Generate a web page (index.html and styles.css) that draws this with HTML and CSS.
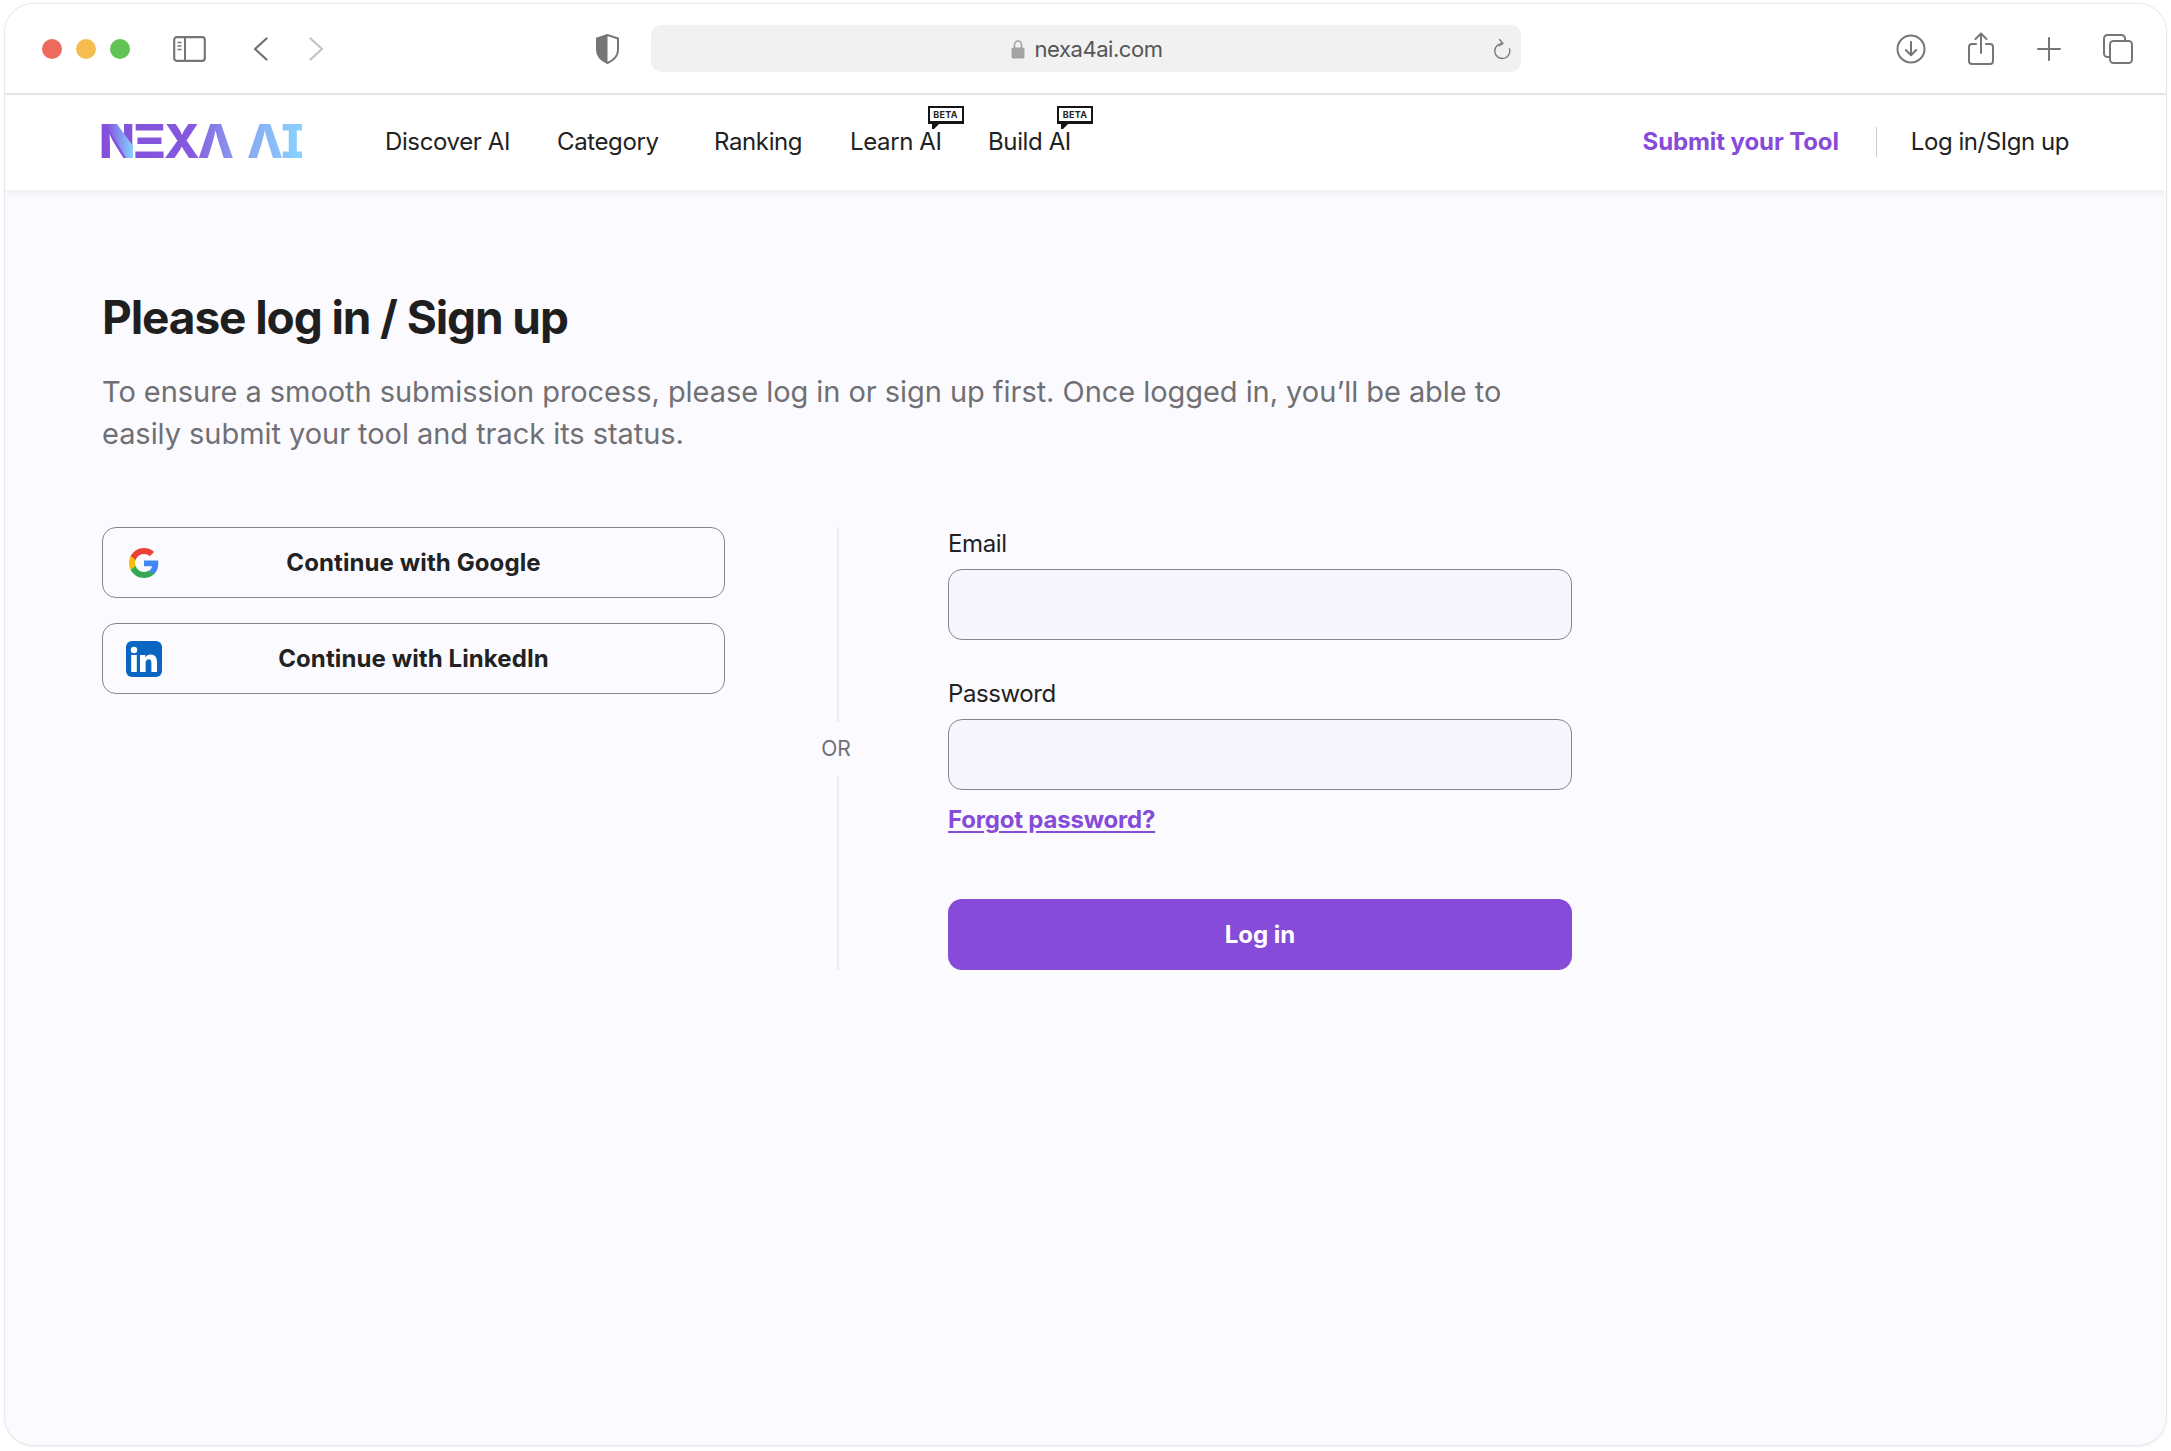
FILE: index.html
```html
<!DOCTYPE html>
<html lang="en">
<head>
<meta charset="utf-8">
<title>Nexa AI - Log in</title>
<link rel="stylesheet" href="styles.css">
</head>
<body>
<div class="window">
  <header class="toolbar">
    <div class="lights"><span class="light red"></span><span class="light yellow"></span><span class="light green"></span></div>
    <svg class="ic sidebar" width="33" height="26" viewBox="0 0 33 26" fill="none" stroke="#767676"><rect x="1.2" y="1.2" width="30.6" height="23.6" rx="2.5" stroke-width="2.2"/><path d="M12 1v24" stroke-width="2"/><path d="M4.5 6.5h4M4.5 10h4M4.5 13.500h4" stroke-width="1.6"/></svg>
    <svg class="ic back" width="15" height="24" viewBox="0 0 15 24" fill="none" stroke="#6f6f6f" stroke-width="2.2" stroke-linecap="round" stroke-linejoin="round"><path d="M13.500 1.500 2 12l11.500 10.500"/></svg>
    <svg class="ic forward" width="15" height="24" viewBox="0 0 15 24" fill="none" stroke="#c2c2c2" stroke-width="2.2" stroke-linecap="round" stroke-linejoin="round"><path d="M1.500 1.500 13 12 1.500 22.500"/></svg>
    <svg class="ic shield" width="25" height="30" viewBox="0 0 25 30"><path d="M12.500 1 2 4.500V16c0 6 5 10.500 10.500 13C18 26.500 23 22 23 16V4.500z" fill="#fff" stroke="#767676" stroke-width="2"/><path d="M12.500 1 2 4.500V16c0 6 5 10.500 10.500 13z" fill="#767676"/></svg>
    <div class="urlbar">
      <div class="url">
        <svg class="lock" width="14" height="20" viewBox="0 0 14 20"><path d="M3.500 9V5.500a3.500 3.500 0 0 1 7 0V9" fill="none" stroke="#a3a3a3" stroke-width="1.600"/><rect x="0.500" y="8.500" width="13" height="11" rx="1.800" fill="#a3a3a3"/></svg>
        <span class="domain">nexa4ai.com</span>
      </div>
      <svg class="reload" width="19" height="23" viewBox="0 0 19 23" fill="none" stroke="#7d7d7d" stroke-width="1.400" stroke-linecap="round" stroke-linejoin="round"><path d="M10.500 5.500a7.500 7.500 0 1 0 7 5.500"/><path d="M7.500 1.500l3.500 4-4 2.500"/></svg>
    </div>
    <div class="tools">
      <svg class="ic" width="30" height="30" viewBox="0 0 30 30" fill="none" stroke="#767676" stroke-width="2" stroke-linecap="round" stroke-linejoin="round"><circle cx="15" cy="15" r="13.500"/><path d="M15 8v13M9.800 16l5.200 5.200 5.200-5.200"/></svg>
      <svg class="ic" width="26" height="33" viewBox="0 0 26 33" fill="none" stroke="#767676" stroke-width="2" stroke-linecap="round" stroke-linejoin="round"><path d="M8 12H4a3 3 0 0 0-3 3v14a3 3 0 0 0 3 3h18a3 3 0 0 0 3-3V15a3 3 0 0 0-3-3h-4"/><path d="M13 21V1.500M7.500 7 13 1.500 18.500 7"/></svg>
      <svg class="ic" width="24" height="24" viewBox="0 0 24 24" fill="none" stroke="#767676" stroke-width="2" stroke-linecap="round"><path d="M12 1v22M1 12h22"/></svg>
      <svg class="ic" width="30" height="30" viewBox="0 0 30 30" fill="none" stroke="#767676" stroke-width="2" stroke-linejoin="round"><path d="M6 23H4.500A3.500 3.500 0 0 1 1 19.500v-15A3.500 3.500 0 0 1 4.500 1h14A3.500 3.500 0 0 1 22 4.500V7"/><rect x="7" y="7" width="22" height="22" rx="3.500"/></svg>
    </div>
  </header>

  <nav class="site-nav">
    <a class="logo" aria-label="NEXA AI"><span class="logo-text">NΞXΛ ΛI</span><svg class="logo-slash" width="32" height="34" viewBox="0 0 32 34"><defs><linearGradient id="sl" x1="0" x2="1"><stop offset="0" stop-color="#8350dc"/><stop offset="1" stop-color="#86d3ff"/></linearGradient></defs><path d="M4 0h11l16 22v12h-7z" fill="url(#sl)"/></svg></a>
    <div class="links">
      <a class="link">Discover AI</a>
      <a class="link">Category</a>
      <a class="link">Ranking</a>
      <a class="link has-beta">Learn AI<span class="beta">BETA</span></a>
      <a class="link has-beta">Build AI<span class="beta">BETA</span></a>
    </div>
    <div class="nav-right">
      <a class="submit">Submit your Tool</a>
      <span class="nav-sep"></span>
      <a class="login-link">Log in/SIgn up</a>
    </div>
  </nav>

  <main class="content">
    <h1 class="title">Please log in / Sign up</h1>
    <p class="intro">To ensure a smooth submission process, please log in or sign up first. Once logged in, you’ll be able to easily submit your tool and track its status.</p>
    <div class="auth">
      <div class="social">
        <button class="social-btn">
          <svg class="g-icon" width="30" height="30" viewBox="0 0 48 48"><path fill="#EA4335" d="M24 9.500c3.540 0 6.710 1.220 9.210 3.600l6.850-6.850C35.900 2.380 30.470 0 24 0 14.620 0 6.510 5.380 2.560 13.220l7.980 6.190C12.430 13.720 17.740 9.500 24 9.500z"/><path fill="#4285F4" d="M46.980 24.550c0-1.570-.15-3.090-.38-4.550H24v9.020h12.940c-.58 2.960-2.260 5.480-4.780 7.180l7.730 6c4.510-4.180 7.090-10.360 7.090-17.650z"/><path fill="#FBBC05" d="M10.530 28.590c-.48-1.450-.76-2.990-.76-4.590s.27-3.140.76-4.590l-7.980-6.190C.92 16.460 0 20.120 0 24c0 3.880.92 7.540 2.560 10.780l7.970-6.190z"/><path fill="#34A853" d="M24 48c6.480 0 11.930-2.130 15.890-5.810l-7.730-6c-2.150 1.450-4.920 2.300-8.160 2.300-6.260 0-11.570-4.220-13.470-9.910l-7.980 6.190C6.510 42.620 14.620 48 24 48z"/></svg>
          <span class="social-label">Continue with Google</span>
        </button>
        <button class="social-btn">
          <svg class="li-icon" width="36" height="36" viewBox="0 0 36 36"><rect width="36" height="36" rx="6" fill="#0a66c2"/><circle cx="8" cy="9" r="3.200" fill="#fff"/><path fill="#fff" d="M5.200 14h5.600v17H5.200zM14 14h5.300v2.400c1-1.700 2.900-2.800 5.200-2.800 4.700 0 6.500 3 6.500 7.500V31h-5.600v-8.900c0-2.300-.7-3.800-2.700-3.800-2.200 0-3.100 1.700-3.100 3.900V31H14z"/></svg>
          <span class="social-label">Continue with LinkedIn</span>
        </button>
      </div>
      <div class="divider"><span class="vline"></span><span class="or">OR</span><span class="vline"></span></div>
      <form class="form">
        <label class="field-label">Email</label>
        <div class="input"></div>
        <label class="field-label second">Password</label>
        <div class="input"></div>
        <a class="forgot">Forgot password?</a>
        <button type="button" class="primary">Log in</button>
      </form>
    </div>
  </main>
</div>
</body>
</html>
```

FILE: styles.css
```css
* { box-sizing: border-box; }
html, body { margin: 0; height: 100%; background: #fff; }
body { padding: 4px 5px 6px 5px; font-family: Inter, "Noto Sans", sans-serif; color: #1f1f1f; }
a { text-decoration: none; color: inherit; }

.window { height: 100%; display: flex; flex-direction: column; border-radius: 28px; overflow: hidden; background: #fbfbff; box-shadow: 0 0 0 1px #e8e8ea, 0 1px 3px rgba(0,0,0,.12); }

.toolbar { flex: none; height: 91px; background: #fff; border-bottom: 2px solid #e8e8ea; display: flex; align-items: center; padding-left: 37px; }
.ic { flex: none; display: block; }
.lights { display: flex; gap: 14px; }
.light { width: 20px; height: 20px; border-radius: 50%; }
.red { background: #ee6a5f; }
.yellow { background: #f5bd4f; }
.green { background: #61c454; }
.sidebar { margin-left: 43px; }
.back { margin-left: 47px; }
.forward { margin-left: 41px; }
.shield { margin-left: 271px; }
.urlbar { flex: none; width: 870px; height: 47px; margin-left: 31px; background: #f1f1f1; border-radius: 10px; display: flex; align-items: center; position: relative; justify-content: center; }
.url { display: flex; align-items: center; gap: 9px; margin-left: 2px; }
.domain { font-size: 22px; letter-spacing: -.45px; color: #555; }
.reload { position: absolute; right: 10px; top: 13px; }
.tools { display: flex; align-items: center; gap: 0; margin-left: 375px; width: 237px; justify-content: space-between; }

.site-nav { flex: none; height: 95px; background: #fff; box-shadow: 0 2px 8px rgba(30,30,60,.08); display: flex; align-items: center; padding: 0 97px 0 97px; position: relative; }
.logo { position: relative; display: block; width: 283px; flex: none; }
.logo-text { display: inline-block; margin-left: -3px; font-size: 47px; line-height: 34px; font-weight: 800; font-feature-settings: "cv08" 1; letter-spacing: -2px; word-spacing: 7px; background: linear-gradient(90deg, #8350dc 0, #8558de 45%, #8aa4f2 70%, #88d3ff 100%); -webkit-background-clip: text; background-clip: text; color: transparent; white-space: nowrap; }
.logo-slash { position: absolute; left: 0; top: 0; }
.links { display: grid; grid-template-columns: 172px 157px 136px 138px auto; margin-top: -2px; font-size: 24px; letter-spacing: -.38px; color: #222; }
.link { position: relative; white-space: nowrap; }
.has-beta { width: max-content; }
.beta { position: absolute; top: -21px; right: -22px; width: 36px; height: 18px; background: #fff; border: 2px solid #151515; border-bottom-width: 3px; font-size: 9px; line-height: 13px; font-weight: 700; letter-spacing: .3px; text-align: center; color: #222; }
.beta::after { content: ""; position: absolute; left: 2px; top: 15px; border-left: 2px solid #151515; border-top: 0 solid transparent; width: 0; height: 0; border-right: 6px solid transparent; border-top-width: 6px; border-top-color: #151515; }
.nav-right { margin-left: auto; margin-top: -2px; display: flex; align-items: center; font-size: 24px; }
.submit { font-weight: 700; letter-spacing: -.1px; color: #864bd9; }
.nav-sep { width: 1px; height: 30px; background: #c9ced6; margin: 0 34px 0 37px; }
.login-link { letter-spacing: -.45px; color: #222; }

.content { flex: 1; padding: 0 0 0 97px; }
.title { margin: 0; padding-top: 97px; font-size: 46px; line-height: 60px; font-weight: 650; letter-spacing: -1.1px; color: #1f1f1f; }
.intro { margin: 24px 0 0; width: 1420px; font-size: 29px; line-height: 41.500px; letter-spacing: -.05px; color: #707074; }
.auth { margin-top: 73px; display: grid; grid-template-columns: 623px 223px 624px; height: 443px; }
.social { display: flex; flex-direction: column; gap: 25px; }
.social-btn { height: 71px; width: 100%; display: grid; grid-template-columns: 1fr auto 1fr; align-items: center; padding: 0 23px; background: transparent; border: 1.500px solid #85858a; border-radius: 14px; font: inherit; color: #222; }
.social-label { font-size: 24px; font-weight: 650; letter-spacing: .1px; }
.g-icon { margin-left: 3px; display: block; }
.li-icon { display: block; }
.divider { display: flex; flex-direction: column; align-items: center; }
.vline { flex: 1; width: 2px; margin-left: 2px; background: #ebebf0; }
.or { height: 54px; line-height: 54px; font-size: 21px; color: #6f6f73; margin-left: -1px; }
.form { display: flex; flex-direction: column; align-items: stretch; }
.field-label { height: 34px; margin-bottom: 8px; line-height: 34px; font-size: 24px; letter-spacing: -.4px; color: #222; }
.second { margin-top: 37px; }
.input { height: 71px; background: #f7f6fe; border: 1.500px solid #85858a; border-radius: 14px; }
.forgot { margin-top: 13px; line-height: 34px; font-size: 24px; font-weight: 650; letter-spacing: -.2px; color: #864bd9; text-decoration: underline; text-underline-offset: 3px; align-self: flex-start; }
.primary { margin-top: auto; height: 71px; background: #864bd9; color: #fff; border: 0; border-radius: 14px; font: inherit; font-size: 24px; font-weight: 650; }
```
